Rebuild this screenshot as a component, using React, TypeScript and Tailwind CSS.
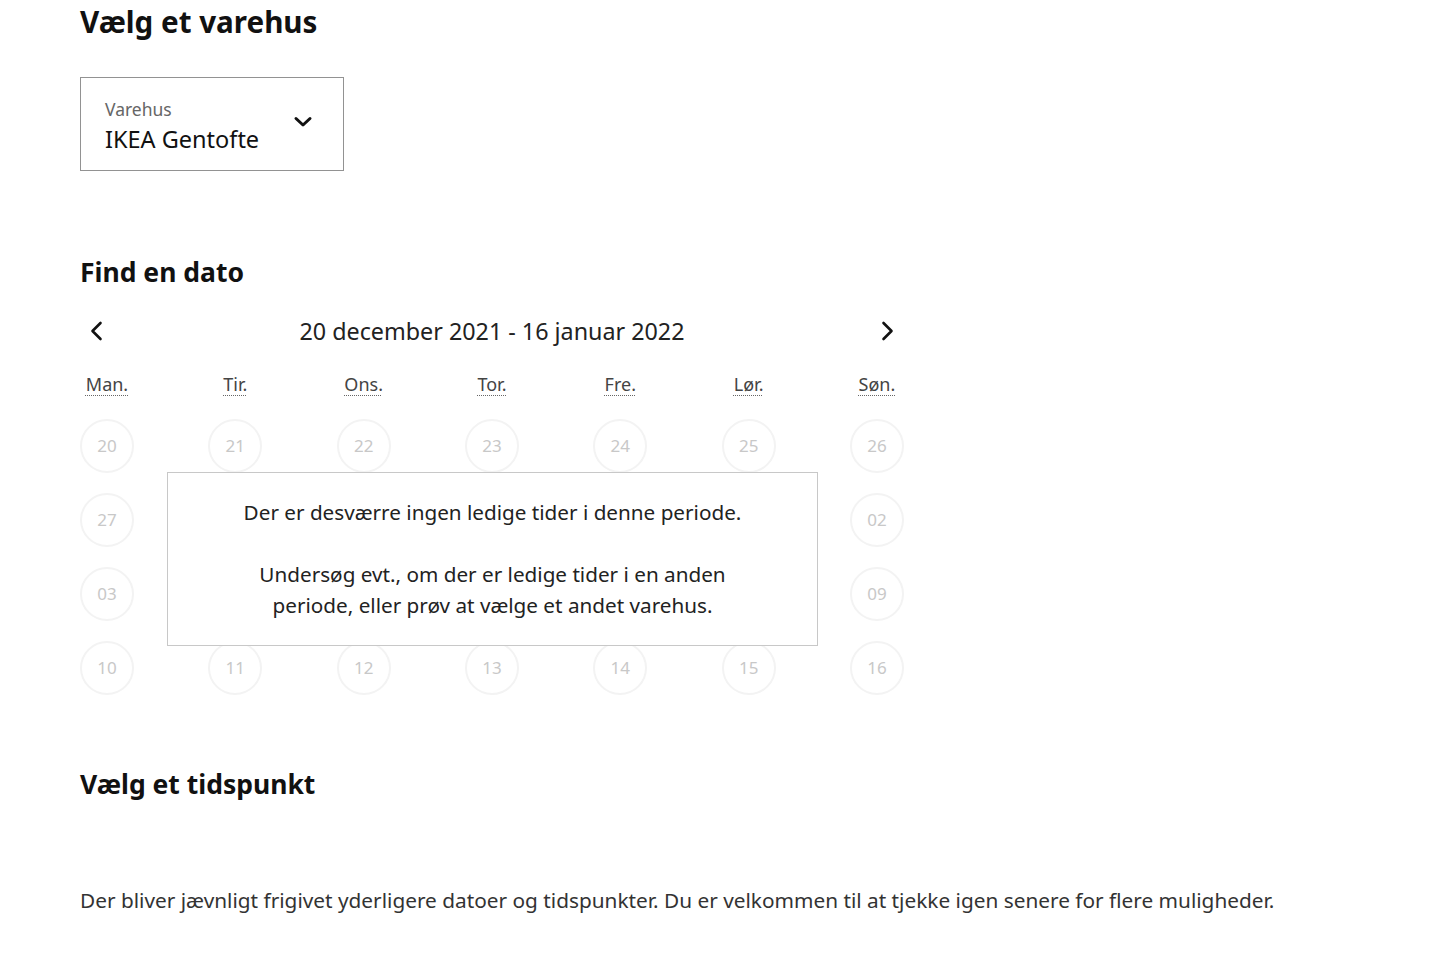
const days = ['Man.', 'Tir.', 'Ons.', 'Tor.', 'Fre.', 'Lør.', 'Søn.'];

// dates hidden behind the notice box are left empty
const weeks = [
  ['20', '21', '22', '23', '24', '25', '26'],
  ['27', '', '', '', '', '', '02'],
  ['03', '', '', '', '', '', '09'],
  ['10', '11', '12', '13', '14', '15', '16'],
];

function Chevron({ dir }: { dir: 'left' | 'right' | 'down' }) {
  if (dir === 'down') {
    return (
      <svg width="20" height="12" viewBox="0 0 20 12" fill="none" stroke="#111" strokeWidth="3" strokeLinecap="round" strokeLinejoin="round">
        <polyline points="3,2.5 10,9 17,2.5" />
      </svg>
    );
  }
  const pts = dir === 'left' ? '10.5,2 2.5,10 10.5,18' : '2.5,2 10.5,10 2.5,18';
  return (
    <svg width="13" height="20" viewBox="0 0 13 20" fill="none" stroke="#111" strokeWidth="2.6" strokeLinecap="round" strokeLinejoin="round">
      <polyline points={pts} />
    </svg>
  );
}

export default function App() {
  return (
    <div className="min-h-[966px] bg-white pl-20 text-[#111] font-['Noto_Sans',sans-serif]">
      {/* Varehus */}
      <h2 className="pt-[2px] text-[29.6px] font-bold leading-[40px]">Vælg et varehus</h2>
      <button className="mt-[35px] flex h-[94px] w-[264px] items-center justify-between border border-[#929292] pl-6 pr-[30px] text-left">
        <div className="mt-[3px]">
          <div className="text-[17.5px] leading-6 text-[#666]">Varehus</div>
          <div className="mt-[2px] text-[23.5px] leading-8 text-[#111]">IKEA Gentofte</div>
        </div>
        <span className="-mt-1">
          <Chevron dir="down" />
        </span>
      </button>

      {/* Dato */}
      <h2 className="mt-[83px] text-[26.5px] font-bold leading-9">Find en dato</h2>
      <div className="w-[824px]">
        <div className="mt-[21px] flex h-10 items-center justify-between">
          <span className="flex w-8 justify-center">
            <Chevron dir="left" />
          </span>
          <span className="text-[23.3px] text-[#222]">20 december 2021 - 16 januar 2022</span>
          <span className="flex w-8 justify-center">
            <Chevron dir="right" />
          </span>
        </div>
        <div className="mt-[21px] flex justify-between">
          {days.map((d) => (
            <abbr
              key={d}
              title={d}
              className="w-[54px] text-center text-[18px] leading-6 text-[#444] underline decoration-dotted decoration-[#666] decoration-1 underline-offset-[4px]"
            >
              {d}
            </abbr>
          ))}
        </div>
        <div className="relative mt-[23px] flex flex-col gap-5">
          {weeks.map((w, i) => (
            <div key={i} className="flex justify-between">
              {w.map((n, j) => (
                <div
                  key={j}
                  className="flex h-[54px] w-[54px] items-center justify-center rounded-full border-2 border-[#f3f3f3] text-[17px] text-[#c8c8c8]"
                >
                  {n}
                </div>
              ))}
            </div>
          ))}
          <div className="absolute left-[87px] top-[53px] flex h-[174px] w-[651px] flex-col items-center justify-center border border-[#c8c8c8] bg-white text-center text-[20.7px] leading-[31px] text-[#222]">
            <p>Der er desværre ingen ledige tider i denne periode.</p>
            <p className="mt-[31px] w-[520px]">
              Undersøg evt., om der er ledige tider i en anden periode, eller prøv at vælge et andet varehus.
            </p>
          </div>
        </div>
      </div>

      {/* Tidspunkt */}
      <h2 className="mt-[71px] text-[26.5px] font-bold leading-9">Vælg et tidspunkt</h2>
      <p className="mt-[84px] text-[20.8px] leading-7 text-[#333]">
        Der bliver jævnligt frigivet yderligere datoer og tidspunkter. Du er velkommen til at tjekke igen senere for flere muligheder.
      </p>
    </div>
  );
}
